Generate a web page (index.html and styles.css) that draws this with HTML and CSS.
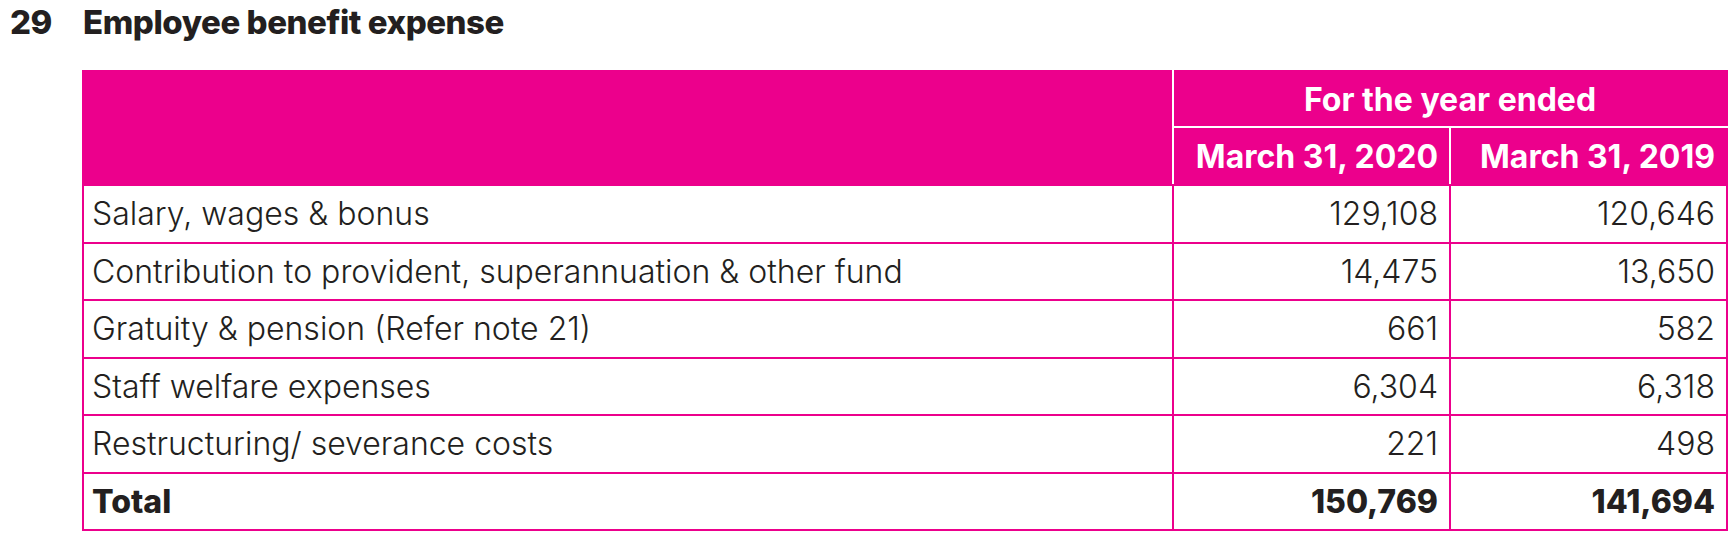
FILE: index.html
```html
<!DOCTYPE html>
<html lang="en">
<head>
<meta charset="utf-8">
<title>Employee benefit expense</title>
<link rel="stylesheet" href="styles.css">
</head>
<body>
<div class="page">
  <h1 class="title"><span class="num">29</span><span class="name">Employee benefit expense</span></h1>
  <table class="fin">
    <colgroup>
      <col class="c-label">
      <col class="c-val">
      <col class="c-val">
    </colgroup>
    <thead>
      <tr class="h1">
        <th rowspan="2" class="blank"></th>
        <th colspan="2" class="center">For the year ended</th>
      </tr>
      <tr class="h2">
        <th class="right">March 31, 2020</th>
        <th class="right">March 31, 2019</th>
      </tr>
    </thead>
    <tbody>
      <tr><td>Salary, wages &amp; bonus</td><td class="right">129,108</td><td class="right">120,646</td></tr>
      <tr><td>Contribution to provident, superannuation &amp; other fund</td><td class="right">14,475</td><td class="right">13,650</td></tr>
      <tr><td>Gratuity &amp; pension (Refer note 21)</td><td class="right">661</td><td class="right">582</td></tr>
      <tr><td>Staff welfare expenses</td><td class="right">6,304</td><td class="right">6,318</td></tr>
      <tr><td>Restructuring/ severance costs</td><td class="right">221</td><td class="right">498</td></tr>
      <tr class="total"><td>Total</td><td class="right">150,769</td><td class="right">141,694</td></tr>
    </tbody>
  </table>
</div>
</body>
</html>
```
FILE: styles.css
```css
html, body {
  margin: 0;
  padding: 0;
  background: #ffffff;
}
body {
  font-family: Inter, "Liberation Sans", sans-serif;
  color: #231f20;
}
.page {
  padding: 2px 0 0 0;
}
.title {
  margin: 0 0 28px 0;
  font-size: 33px;
  line-height: 40px;
  font-weight: 800;
  letter-spacing: -0.45px;
  display: flex;
  color: #231f20;
}
.title .num {
  width: 83px;
  padding-left: 10px;
  box-sizing: border-box;
}
.fin {
  margin-left: 82px;
  width: 1644px;
  border-collapse: collapse;
  table-layout: fixed;
}
.c-label { width: 1090px; }
.c-val { width: 277px; }
.fin th {
  background: #ec008c;
  color: #ffffff;
  font-weight: 700;
  font-size: 32px;
  border: 2px solid #ffffff;
  padding: 0 11px;
  white-space: nowrap;
}
.fin thead tr:first-child th { border-top-color: #ec008c; }
.fin th.blank { border-left-color: #ec008c; }
.fin thead tr th:last-child { border-right-color: #ec008c; }
.fin tr.h1 th.center { border-right-color: #ec008c; }
.fin tr.h2 th { border-bottom-color: #ec008c; }
.fin th.blank { border-bottom-color: #ec008c; }
.fin tr.h1 { height: 56px; }
.fin tr.h2 { height: 58px; }
.fin .center { text-align: center; }
.fin .right { text-align: right; }
.fin td {
  border: 2px solid #ec008c;
  font-size: 32px;
  font-weight: 300;
  padding: 0 11px 0 8px;
  height: 53px;
  white-space: nowrap;
  color: #231f20;
}
.fin tbody tr { height: 57.5px; }
.fin tr.total td {
  font-weight: 800;
}
```
